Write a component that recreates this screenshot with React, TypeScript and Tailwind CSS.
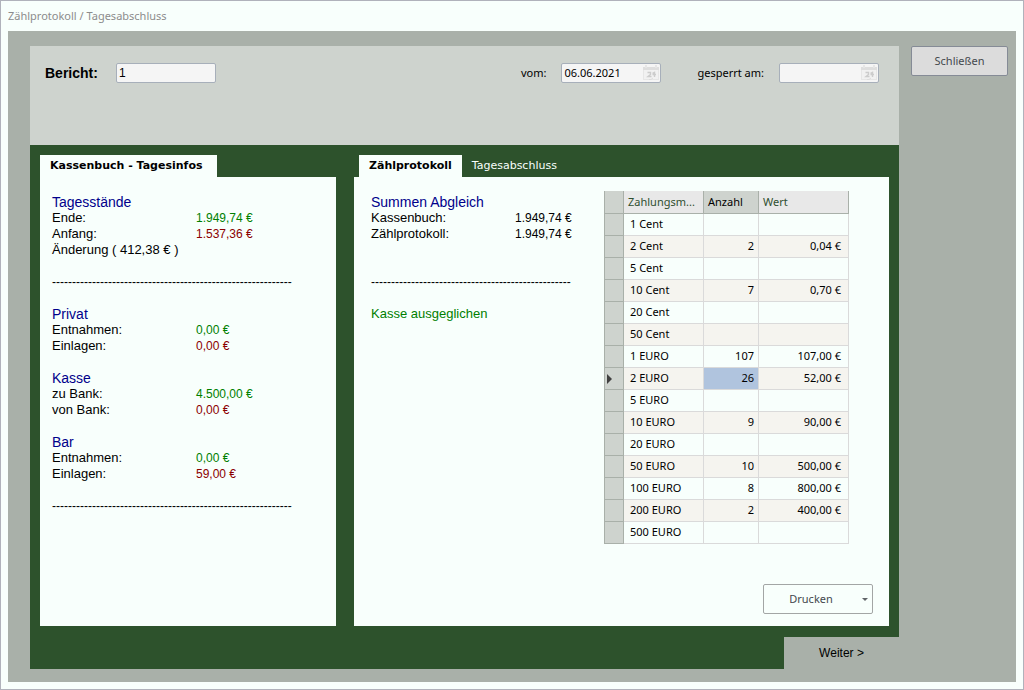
import React from "react";

type Tone = "plain" | "green" | "red";

interface Line {
  label: string;
  value?: string;
  tone?: Tone;
}

const toneClass: Record<Tone, string> = {
  plain: "text-black",
  green: "text-[#008000]",
  red: "text-[#8b0000]",
};

const dayGroups: { title: string; lines: Line[]; note?: string; ruled?: boolean }[] = [
  {
    title: "Tagesstände",
    lines: [
      { label: "Ende:", value: "1.949,74 €", tone: "green" },
      { label: "Anfang:", value: "1.537,36 €", tone: "red" },
    ],
    note: "Änderung ( 412,38 € )",
    ruled: true,
  },
  {
    title: "Privat",
    lines: [
      { label: "Entnahmen:", value: "0,00 €", tone: "green" },
      { label: "Einlagen:", value: "0,00 €", tone: "red" },
    ],
  },
  {
    title: "Kasse",
    lines: [
      { label: "zu Bank:", value: "4.500,00 €", tone: "green" },
      { label: "von Bank:", value: "0,00 €", tone: "red" },
    ],
  },
  {
    title: "Bar",
    lines: [
      { label: "Entnahmen:", value: "0,00 €", tone: "green" },
      { label: "Einlagen:", value: "59,00 €", tone: "red" },
    ],
    ruled: true,
  },
];

const rows: { name: string; count?: number; value?: string; current?: boolean }[] = [
  { name: "1 Cent" },
  { name: "2 Cent", count: 2, value: "0,04 €" },
  { name: "5 Cent" },
  { name: "10 Cent", count: 7, value: "0,70 €" },
  { name: "20 Cent" },
  { name: "50 Cent" },
  { name: "1 EURO", count: 107, value: "107,00 €" },
  { name: "2 EURO", count: 26, value: "52,00 €", current: true },
  { name: "5 EURO" },
  { name: "10 EURO", count: 9, value: "90,00 €" },
  { name: "20 EURO" },
  { name: "50 EURO", count: 10, value: "500,00 €" },
  { name: "100 EURO", count: 8, value: "800,00 €" },
  { name: "200 EURO", count: 2, value: "400,00 €" },
  { name: "500 EURO" },
];

function GroupTitle({ children }: { children: React.ReactNode }) {
  return <h3 className="text-[14px] leading-4 text-[#00008b]">{children}</h3>;
}

function LabelLine({ label, value, tone = "plain" }: Line) {
  return (
    <div className="flex">
      <dt className="w-36 shrink-0">{label}</dt>
      <dd className={`text-[12px] leading-4 ${toneClass[tone]}`}>{value}</dd>
    </div>
  );
}

function DashRule({ count }: { count: number }) {
  return (
    <div aria-hidden="true" className="text-[12px] leading-4 whitespace-nowrap">
      {"-".repeat(count)}
    </div>
  );
}

function CalendarIcon() {
  return (
    <svg width="16" height="16" viewBox="0 0 16 16" aria-hidden="true">
      <rect x="0.5" y="2.5" width="15" height="12" fill="#f1f1f1" stroke="#e6e6e6" />
      <rect x="0" y="2" width="16" height="3" fill="#dedede" />
      <rect x="2" y="0" width="2" height="3" fill="#e6e6e6" />
      <rect x="12" y="0" width="2" height="3" fill="#e6e6e6" />
      <path
        d="M4.5 7.5H7.5V9.5L5 11.5H8.5M9.5 8.5L11.5 7.5V12M9.5 9.5H13"
        fill="none"
        stroke="#cccccc"
        strokeWidth="1.4"
      />
      <path d="M6 14.5H8L10 13" fill="none" stroke="#dddddd" />
    </svg>
  );
}

function DateField({ id, label, value }: { id: string; label: string; value: string }) {
  return (
    <div className="flex items-center">
      <label htmlFor={id}>{label}</label>
      <div className="ml-[15px] flex h-5 w-[100px] items-center rounded-xs border border-[#a7afba] bg-[#f5f5f5] pr-px">
        <input
          id={id}
          type="text"
          defaultValue={value}
          className="min-w-0 flex-1 bg-transparent pl-0.5 outline-none"
        />
        <button type="button" aria-label={`${label} Kalender`} className="shrink-0">
          <CalendarIcon />
        </button>
      </div>
    </div>
  );
}

function CountTable() {
  return (
    <table className="w-[245px] table-fixed border-separate border-spacing-0 border-l border-[#a9b0a9]">
      <colgroup>
        <col className="w-[19px]" />
        <col className="w-20" />
        <col className="w-[55px]" />
        <col className="w-[90px]" />
      </colgroup>
      <thead>
        <tr className="h-[23px] text-left text-[#2f4f2f]">
          <th aria-label="Auswahl" className="border-r border-b border-[#a9b0a9] bg-[#ced3ce] p-0" />
          <th className="border-r border-b border-[#a9b0a9] bg-[#e8e8e8] p-0 pl-1 font-normal">
            Zahlungsm...
          </th>
          <th className="border-r border-b border-[#a9b0a9] bg-[#ced3ce] p-0 pl-1 font-normal text-black">
            Anzahl
          </th>
          <th className="border-r border-b border-[#a9b0a9] bg-[#e8e8e8] p-0 pl-1 font-normal">Wert</th>
        </tr>
      </thead>
      <tbody>
        {rows.map((row) => (
          <tr key={row.name} className="h-[22px] bg-[#f8fffc] even:bg-[#f5f4ef]">
            <td className="border-r border-b border-[#a9b0a9] bg-[#ced3ce] p-0">
              {row.current && (
                <svg width="5" height="10" viewBox="0 0 5 10" className="ml-0.5 block" aria-hidden="true">
                  <path d="M0 0L5 5L0 10Z" fill="#404040" />
                </svg>
              )}
            </td>
            <td className="border-r border-b border-[#dadada] p-0 pl-1.5">{row.name}</td>
            <td
              className={`border-r border-b border-[#dadada] p-0 pr-1 text-right ${
                row.current ? "bg-[#b0c4de]" : ""
              }`}
            >
              {row.count}
            </td>
            <td className="border-r border-b border-[#dadada] p-0 pr-[7px] text-right">{row.value}</td>
          </tr>
        ))}
      </tbody>
    </table>
  );
}

export default function App() {
  return (
    <div className="flex min-h-screen flex-col border border-[#b0b2bb] bg-[#f8fffc] px-[7px] pb-[7px] font-['Noto_Sans',sans-serif] text-[11px] text-black">
      <h1 className="flex h-[30px] items-center text-[#8c8c8c]">Zählprotokoll / Tagesabschluss</h1>

      <div className="flex flex-1 bg-[#a9b0a9] pt-[15px] pr-2 pb-[13px] pl-[22px]">
        <main className="flex min-w-0 flex-1 flex-col">
          <section className="flex h-[99px] items-start bg-[#ced3ce] px-[15px] pt-[17px] pr-5">
            <div className="flex h-5 items-center font-['Liberation_Sans',sans-serif]">
              <label htmlFor="bericht" className="w-[71px] text-[14px] font-bold">
                Bericht:
              </label>
              <input
                id="bericht"
                type="text"
                defaultValue="1"
                className="h-5 w-[100px] rounded-xs border border-[#a7afba] bg-[#f5f5f5] pl-0.5 text-[12px] outline-none"
              />
            </div>
            <div className="ml-auto flex gap-9">
              <DateField id="vom" label="vom:" value="06.06.2021" />
              <DateField id="gesperrt" label="gesperrt am:" value="" />
            </div>
          </section>

          <div className="flex flex-1 gap-[18px] bg-[#2d522c] px-2.5 pt-2.5 pb-[11px]">
            <section className="flex w-[296px] flex-col">
              <div className="flex h-[22px] font-['DejaVu_Sans',sans-serif]">
                <h2 className="flex items-center bg-[#f8fffc] pr-3.5 pl-2.5 font-bold">
                  Kassenbuch - Tagesinfos
                </h2>
              </div>
              <div className="flex-1 bg-[#f8fffc] px-3 pt-[17px] font-['Liberation_Sans',sans-serif] text-[13px] leading-4">
                {dayGroups.map((group) => (
                  <div key={group.title} className="mb-4">
                    <GroupTitle>{group.title}</GroupTitle>
                    <dl>
                      {group.lines.map((line) => (
                        <LabelLine key={line.label} {...line} />
                      ))}
                    </dl>
                    {group.note && <p>{group.note}</p>}
                    {group.ruled && (
                      <div className="pt-4">
                        <DashRule count={60} />
                      </div>
                    )}
                  </div>
                ))}
              </div>
            </section>

            <section className="flex min-w-0 flex-1 flex-col">
              <div role="tablist" className="flex h-[22px] pl-[5px] font-['DejaVu_Sans',sans-serif]">
                <button type="button" role="tab" aria-selected="true" className="bg-[#f8fffc] px-2.5 font-bold">
                  Zählprotokoll
                </button>
                <button type="button" role="tab" aria-selected="false" className="px-2.5 text-[#f8fffc]">
                  Tagesabschluss
                </button>
              </div>
              <div className="flex flex-1 flex-col bg-[#f8fffc] pr-4 pb-3 pl-[17px]">
                <div className="flex justify-between">
                  <div className="pt-[17px] font-['Liberation_Sans',sans-serif] text-[13px] leading-4">
                    <GroupTitle>Summen Abgleich</GroupTitle>
                    <dl>
                      <LabelLine label="Kassenbuch:" value="1.949,74 €" />
                      <LabelLine label="Zählprotokoll:" value="1.949,74 €" />
                    </dl>
                    <div className="pt-8 pb-4">
                      <DashRule count={50} />
                    </div>
                    <p className={toneClass.green}>Kasse ausgeglichen</p>
                  </div>
                  <div className="pt-3.5 pr-6">
                    <CountTable />
                  </div>
                </div>
                <button
                  type="button"
                  className="mt-auto flex h-[30px] w-[110px] items-center self-end rounded-xs border border-[#a3a6a5] text-[#44484c]"
                >
                  <span className="flex-1 pr-1">Drucken</span>
                  <svg width="6" height="3" viewBox="0 0 6 3" className="mr-1" aria-hidden="true">
                    <path d="M0 0H6L3 3Z" fill="#606468" />
                  </svg>
                </button>
              </div>
            </section>
          </div>

          <footer className="flex h-8">
            <div className="flex-1 bg-[#2d522c]" />
            <button type="button" className="w-[115px] font-['Liberation_Sans',sans-serif] text-[12px]">
              Weiter &gt;
            </button>
          </footer>
        </main>

        <aside className="ml-3 w-[97px]">
          <button
            type="button"
            className="h-[30px] w-full rounded-xs border border-[#858b96] bg-[#dcdcdc] text-[#44484c]"
          >
            Schließen
          </button>
        </aside>
      </div>
    </div>
  );
}
